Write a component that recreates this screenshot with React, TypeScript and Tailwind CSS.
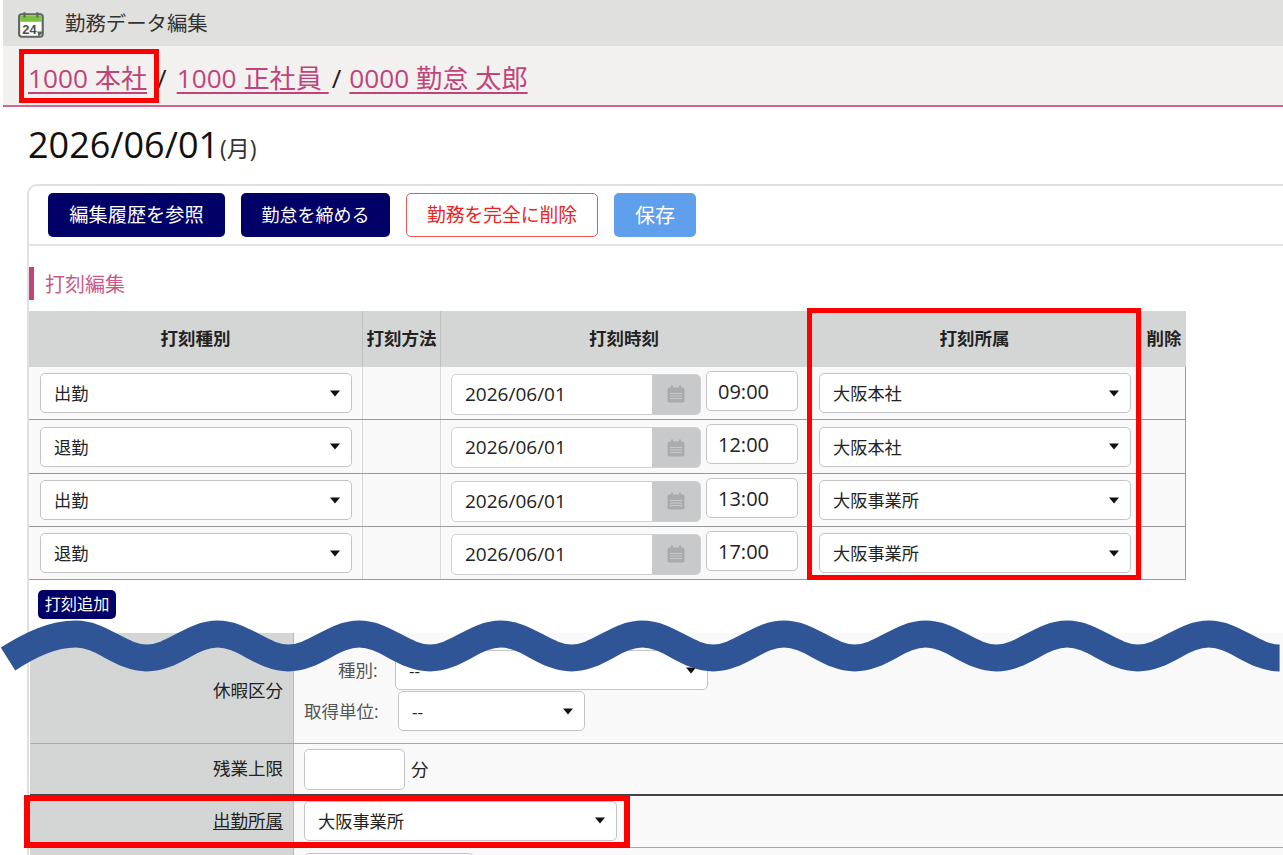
const Caret = () => (
  <svg width="10" height="7" viewBox="0 0 10 7" className="shrink-0"><path d="M0 0.5h10L5 6.5z" fill="#111" /></svg>
);

const Sel = ({ label, cls }: { label: string; cls: string }) => (
  <div className={`flex h-[40px] items-center justify-between rounded-[5px] border border-[#c4c4c4] bg-white pl-[13px] pr-[11px] text-[17.2px] text-[#222] ${cls}`}>
    <span className="pt-[2px]">{label}</span>
    <Caret />
  </div>
);

const CalIcon = () => (
  <svg width="20" height="18" viewBox="0 0 20 18">
    <rect x="1.5" y="2.5" width="17" height="15" rx="2" fill="#a9abac" />
    <rect x="5" y="0.5" width="2" height="4" fill="#a9abac" />
    <rect x="13" y="0.5" width="2" height="4" fill="#a9abac" />
    <path d="M4 8.5h12M4 11h12M4 13.5h12" stroke="#c9cacb" strokeWidth="1.2" />
  </svg>
);

const Logo = () => (
  <svg width="30" height="30" viewBox="0 0 28 28" className="mt-[3px]">
    <rect x="2" y="4" width="22" height="21" rx="2.5" fill="#fff" stroke="#5f6462" strokeWidth="2" />
    <rect x="3" y="5" width="20" height="6" fill="#7cc242" />
    <path d="M7 2v5M19 2v5" stroke="#5f6462" strokeWidth="2" />
    <text x="5" y="22" fontSize="12" fontWeight="700" fill="#4a4f4d" fontFamily="'Liberation Sans', sans-serif">24</text>
    <path d="M19 20l6 0-5 5z" fill="#5f6462" />
  </svg>
);

const rows = [
  { kind: "出勤", time: "09:00", org: "大阪本社", h: "h-[53px]" },
  { kind: "退勤", time: "12:00", org: "大阪本社", h: "h-[54px]" },
  { kind: "出勤", time: "13:00", org: "大阪事業所", h: "h-[53px]" },
  { kind: "退勤", time: "17:00", org: "大阪事業所", h: "h-[53px]" },
];

const Th = ({ cls, children }: { cls: string; children: React.ReactNode }) => (
  <div className={`flex h-full items-center justify-center border-r border-[#bfc1c0] pb-[2px] text-[17.5px] font-bold text-[#222] ${cls}`}>{children}</div>
);

const Waves = () => {
  const period = 70.8;
  let d = "M 8 659";
  d += " C 30 645 52 634 76 634";
  let x = 76;
  let up = true;
  while (x < 1270) {
    const nx = x + period;
    const y1 = up ? 634 : 658;
    const y2 = up ? 658 : 634;
    d += ` C ${x + 26} ${y1} ${nx - 26} ${y2} ${nx} ${y2}`;
    x = nx;
    up = !up;
  }
  return (
    <svg className="pointer-events-none absolute left-0 top-0" width="1283" height="855" viewBox="0 0 1283 855">
      <path d={d} fill="none" stroke="#2f5597" strokeWidth="27" />
    </svg>
  );
};

export default function App() {
  return (
    <div className="relative h-[855px] w-[1283px] overflow-hidden bg-white font-['Open_Sans','Noto_Sans_CJK_JP',sans-serif] text-[#222]">
      <header className="ml-[3px] flex h-[46px] items-center gap-[18px] bg-[#e0e0de] pl-[14px]">
        <Logo />
        <span className="text-[20.4px] text-[#333]">勤務データ編集</span>
      </header>
      <nav className="ml-[3px] flex h-[61px] items-center border-b-2 border-[#d0668f] bg-[#f2f1ef] pl-[25px] pt-[5px] text-[26.2px] leading-none text-[#222]">
        <a className="text-[#c0447a] underline decoration-[1.5px] underline-offset-[4px]">1000 本社</a>
        <span className="ml-[10px] mr-[10px]">/</span>
        <a className="text-[#c0447a] underline decoration-[1.5px] underline-offset-[4px]">1000 正社員&nbsp;</a>
        <span className="ml-[3px] mr-[8px]">/</span>
        <a className="text-[#c0447a] underline decoration-[1.5px] underline-offset-[4px]">0000 勤怠 太郎</a>
      </nav>
      <div className="flex h-[77px] items-center pb-[2px] pl-[28px]">
        <span className="text-[36px] leading-none text-[#111]">2026/06/01</span>
        <span className="ml-px mt-[8px] text-[23px] leading-none text-[#333]">(月)</span>
      </div>

      <section className="ml-[27px] h-[700px] rounded-tl-[10px] border-l-2 border-t-2 border-[#dfe0df]">
        <div className="flex h-[60px] items-start gap-[16px] border-b-2 border-[#e3e3e3] pl-[19px] pt-[7px]">
          <button className="flex h-[44px] w-[177px] items-center justify-center rounded-[5px] bg-[#000066] pt-[1px] text-[19.2px] text-white">編集履歴を参照</button>
          <button className="flex h-[44px] w-[149px] items-center justify-center rounded-[5px] bg-[#000066] pt-[1px] text-[18px] text-white">勤怠を締める</button>
          <button className="flex h-[44px] w-[192px] items-center justify-center rounded-[5px] border-[1.5px] border-[#ee5555] bg-white pt-[1px] text-[18.75px] text-[#ee2222]">勤務を完全に削除</button>
          <button className="flex h-[44px] w-[82px] items-center justify-center rounded-[5px] bg-[#5f9fec] pt-[1px] text-[20px] text-white">保存</button>
        </div>

        <div className="mt-[21px] flex h-[33px] items-center border-l-[5px] border-[#c0447a] pl-[11px] pt-[3px] text-[20px] text-[#c85a8a]">打刻編集</div>

        <div className="mt-[11px] w-[1157px]">
          <div className="flex h-[56px] bg-[#d4d6d5]">
            <Th cls="w-[334px]">打刻種別</Th>
            <Th cls="w-[78px]">打刻方法</Th>
            <Th cls="w-[367px]">打刻時刻</Th>
            <Th cls="w-[334px]">打刻所属</Th>
            <Th cls="w-[44px] border-r-0">削除</Th>
          </div>
          {rows.map((r, i) => (
            <div key={i} className={`flex border-b border-r border-[#999b9a] bg-[#f9f9f9] ${r.h}`}>
              <div className="flex w-[334px] items-center border-r border-[#d8d8d8] pl-[11px]">
                <Sel label={r.kind} cls="w-[312px]" />
              </div>
              <div className="w-[78px] border-r border-[#d8d8d8]" />
              <div className="flex w-[367px] items-center gap-[5px] border-r border-[#d8d8d8] pl-[10px]">
                <div className="mt-[2px] flex h-[41px] w-[250px] overflow-hidden rounded-[5px] border border-[#d0d0d0] bg-white">
                  <div className="flex flex-1 items-center pl-[13px] text-[19px] text-[#222]">2026/06/01</div>
                  <div className="flex w-[48px] items-center justify-center bg-[#c8c9ca]"><CalIcon /></div>
                </div>
                <div className="mb-[5px] flex h-[40px] w-[92px] items-center rounded-[5px] border border-[#c4c4c4] bg-white pl-[11px] pt-[2px] text-[20px]">{r.time}</div>
              </div>
              <div className="flex w-[334px] items-center border-r border-[#d8d8d8] pl-[11px]">
                <Sel label={r.org} cls="w-[312px]" />
              </div>
              <div className="flex-1" />
            </div>
          ))}
        </div>

        <button className="ml-[9px] mt-[10px] flex h-[29px] w-[78px] items-center justify-center rounded-[5px] bg-[#000066] text-[16.2px] text-white">打刻追加</button>

        <div className="ml-px mt-[14px]">
          <div className="flex h-[111px] border-b border-[#a9a9a9]">
            <div className="flex w-[264px] items-center justify-end border-r border-[#b8b8b8] bg-[#d4d6d5] pr-[10px] pt-[4px] text-[17.5px]">休暇区分</div>
            <div className="flex flex-1 flex-col gap-[1px] bg-[#f9f9f9] pt-[17px]">
              <div className="flex items-center">
                <span className="ml-[44px] w-[57px] text-[17.5px] text-[#555]">種別:</span>
                <Sel label="--" cls="w-[313px]" />
              </div>
              <div className="flex items-center">
                <span className="ml-[10px] w-[94px] text-[17.5px] text-[#555]">取得単位:</span>
                <Sel label="--" cls="w-[187px]" />
              </div>
            </div>
          </div>
          <div className="flex h-[52px] border-b-2 border-[#444]">
            <div className="flex w-[264px] items-center justify-end border-r border-[#b8b8b8] bg-[#d4d6d5] pb-[2px] pr-[10px] text-[17.5px]">残業上限</div>
            <div className="flex flex-1 items-center gap-[6px] bg-[#f9f9f9] pl-[10px]">
              <div className="h-[41px] w-[101px] rounded-[5px] border border-[#c4c4c4] bg-white" />
              <span className="text-[17.5px]">分</span>
            </div>
          </div>
          <div className="flex h-[52px] border-b border-[#a9a9a9]">
            <div className="flex w-[264px] items-center justify-end border-r border-[#b8b8b8] bg-[#d4d6d5] pb-[2px] pr-[10px] text-[17.5px] underline underline-offset-2">出勤所属</div>
            <div className="flex flex-1 items-center bg-[#f9f9f9] pb-[2px] pl-[10px]">
              <Sel label="大阪事業所" cls="w-[313px]" />
            </div>
          </div>
          <div className="flex h-[20px]">
            <div className="w-[264px] border-r border-[#b8b8b8] bg-[#d4d6d5]" />
            <div className="flex-1 bg-[#f9f9f9] pl-[10px] pt-[5px]">
              <div className="h-[20px] w-[170px] rounded-[5px] border border-[#c4c4c4] bg-white" />
            </div>
          </div>
        </div>
      </section>

      <Waves />
      <div className="absolute left-[19px] top-[49px] h-[54px] w-[140px] border-[5px] border-[#ff0000]" />
      <div className="absolute left-[807px] top-[308px] h-[272px] w-[334px] border-[5px] border-[#ff0000]" />
      <div className="absolute left-[24px] top-[795px] h-[53px] w-[606px] border-[6px] border-[#ff0000]" />
    </div>
  );
}
